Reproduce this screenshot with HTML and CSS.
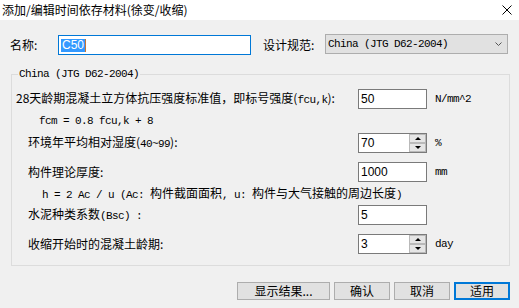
FILE: index.html
```html
<!DOCTYPE html>
<html>
<head>
<title>添加/编辑时间依存材料(徐变/收缩)</title>
<meta name="viewport" content="width=device-width, initial-scale=1">
<link rel="stylesheet" href="styles.css">
</head>
<body>
    <div class="titlebar">
        <span class="title">添加/编辑时间依存材料(徐变/收缩)</span>
        <svg class="close" width="10" height="10" viewBox="0 0 10 10">
            <path d="M0.5 0.5 L9.5 9.5 M9.5 0.5 L0.5 9.5" stroke="#000" stroke-width="1" fill="none"/>
        </svg>
    </div>

    <div class="top-row">
        <label class="name-label">名称:</label>
        <div class="edit name-edit"><span class="sel">C50</span><span class="caret"></span></div>
        <label class="code-label">设计规范:</label>
        <div class="combo">
            <span class="en">China (JTG D62-2004)</span>
            <svg class="chevron" width="7" height="4" viewBox="0 0 7 4">
                <path d="M0.5 0.5 L3.5 3.5 L6.5 0.5" stroke="#555" stroke-width="1" fill="none"/>
            </svg>
        </div>
    </div>

    <div class="group">
        <span class="legend en">China (JTG D62-2004)</span>

        <div class="row">
            <span class="lbl">28天龄期混凝土立方体抗压强度标准值，即标号强度(<span class="en">fcu,k</span>):</span>
            <div class="edit">50</div>
            <span class="unit en">N/mm^2</span>
        </div>
        <div class="note note-fcm"><span class="en">fcm = 0.8 fcu,k + 8</span></div>

        <div class="row">
            <span class="lbl ind2">环境年平均相对湿度(<span class="en">40~99</span>):</span>
            <div class="edit spin">
                <span class="val">70</span>
                <div class="spin-btns">
                    <div class="spin-btn"><span class="tri-up"></span></div>
                    <div class="spin-btn"><span class="tri-down"></span></div>
                </div>
            </div>
            <span class="unit en">%</span>
        </div>

        <div class="row gap">
            <span class="lbl ind2">构件理论厚度:</span>
            <div class="edit">1000</div>
            <span class="unit en">mm</span>
        </div>
        <div class="note note-h"><span><span class="en">h = 2 Ac / u (Ac: </span>构件截面面积<span class="en">, u: </span>构件与大气接触的周边长度<span class="en">)</span></span></div>

        <div class="row">
            <span class="lbl ind2">水泥种类系数<span class="en">(Bsc) :</span></span>
            <div class="edit">5</div>
            <span class="unit"></span>
        </div>

        <div class="row gap">
            <span class="lbl ind2">收缩开始时的混凝土龄期:</span>
            <div class="edit spin">
                <span class="val">3</span>
                <div class="spin-btns">
                    <div class="spin-btn"><span class="tri-up"></span></div>
                    <div class="spin-btn"><span class="tri-down"></span></div>
                </div>
            </div>
            <span class="unit en">day</span>
        </div>
    </div>

    <div class="buttons">
        <button class="btn btn-wide">显示结果...</button>
        <button class="btn">确认</button>
        <button class="btn">取消</button>
        <button class="btn btn-default">适用</button>
    </div>
</body>
</html>
```

FILE: styles.css
```css
body{
    margin: 0;
    width: 519px;
    height: 308px;
    background-color: #f0f0f0;
    font-family: "Noto Sans CJK SC", sans-serif;
    font-size: 12px;
    line-height: 16px;
    color: #000;
    overflow: hidden;
}

.en{
    font-family: "Liberation Mono", "Noto Sans CJK SC", monospace;
    font-size: 11px;
    letter-spacing: -0.6px;
}

.titlebar{
    display: flex;
    justify-content: space-between;
    align-items: center;
    height: 20px;
    background-color: #fff;
    padding-left: 2px;
}

.close{
    margin-right: 7px;
}

.top-row{
    display: flex;
    align-items: center;
    height: 22px;
    margin-top: 14px;
    padding-left: 10px;
}

.name-label{
    width: 48px;
}

.edit{
    box-sizing: border-box;
    display: flex;
    align-items: center;
    width: 69px;
    height: 20px;
    padding-left: 2px;
    background-color: #fff;
    border: 1px solid #7a7a7a;
    font-family: "Liberation Sans", sans-serif;
    font-size: 12px;
}

.name-edit{
    width: 193px;
    border-color: #0078d7;
}

.sel{
    background-color: #3399ff;
    color: #fff;
    line-height: 13px;
    padding: 0 1px;
}

.caret{
    width: 1px;
    height: 13px;
    background-color: #c87533;
}

.code-label{
    width: 62px;
    margin-left: 12px;
}

.combo{
    box-sizing: border-box;
    display: flex;
    justify-content: space-between;
    align-items: center;
    width: 183px;
    height: 20px;
    align-self: flex-start;
    padding-left: 2px;
    padding-right: 5px;
    background-color: #e1e1e1;
    border: 1px solid #adadad;
}

.group{
    position: relative;
    box-sizing: border-box;
    width: 499px;
    margin-left: 11px;
    margin-top: 18px;
    padding: 14px 0 11px 4px;
    border: 1px solid #dcdcdc;
}

.legend{
    position: absolute;
    top: -8px;
    left: 6px;
    line-height: 14px;
    padding: 0 1px;
    background-color: #f0f0f0;
}

.row{
    display: flex;
    align-items: center;
    height: 20px;
}

.row.gap{
    margin-top: 9px;
}

.lbl{
    flex: 1;
    white-space: nowrap;
}

.ind2{
    padding-left: 12px;
}

.unit{
    width: 74px;
    margin-left: 8px;
}

.note{
    display: flex;
    align-items: center;
    white-space: pre;
}

.note-fcm{
    height: 24px;
    padding-left: 23px;
}

.note-h{
    height: 23px;
    padding-left: 26px;
}

.spin{
    padding-right: 0;
}

.spin .val{
    flex: 1;
}

.spin-btns{
    display: flex;
    flex-direction: column;
    justify-content: space-between;
    width: 17px;
    height: 18px;
}

.spin-btn{
    box-sizing: border-box;
    display: flex;
    justify-content: center;
    align-items: center;
    height: 9px;
    background-color: #e5e5e5;
    border: 1px solid #b9b9b9;
}

.tri-up, .tri-down{
    width: 0;
    height: 0;
    border-left: 3px solid transparent;
    border-right: 3px solid transparent;
}

.tri-up{
    border-bottom: 3px solid #000;
}

.tri-down{
    border-top: 3px solid #000;
}

.buttons{
    display: flex;
    justify-content: flex-end;
    gap: 4px;
    margin-top: 16px;
    padding-right: 9px;
}

.btn{
    box-sizing: border-box;
    width: 56px;
    height: 18px;
    padding: 0;
    background-color: #e1e1e1;
    border: 1px solid #adadad;
    font-family: "Noto Sans CJK SC", sans-serif;
    font-size: 12px;
    line-height: 14px;
    color: #000;
}

.btn-wide{
    width: 93px;
}

.btn-default{
    border: 2px solid #0078d7;
}
```
